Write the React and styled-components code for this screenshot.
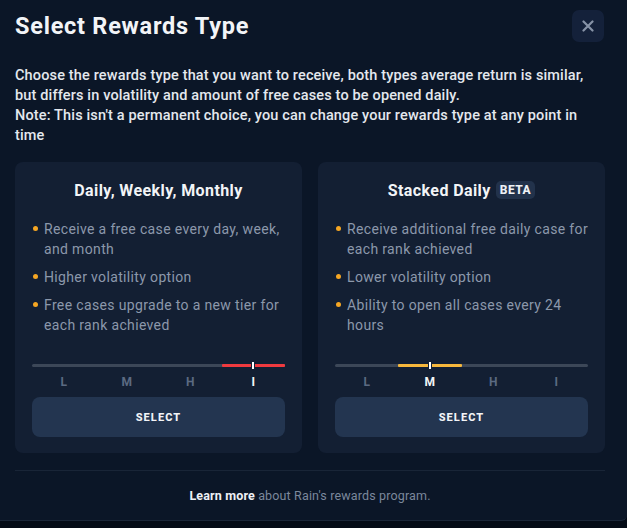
import styled, { createGlobalStyle } from 'styled-components';

const GlobalStyle = createGlobalStyle`
    html, body {
        margin: 0;
        padding: 0;
        background: #040b16;
    }
    body {
        font-family: Roboto, "Noto Sans", sans-serif;
    }
`;

const plans = [
    {
        title: 'Daily, Weekly, Monthly',
        beta: false,
        points: [
            'Receive a free case every day, week, and month',
            'Higher volatility option',
            'Free cases upgrade to a new tier for each rank achieved'
        ],
        level: 3,
        color: '#f03a3f'
    },
    {
        title: 'Stacked Daily',
        beta: true,
        points: [
            'Receive additional free daily case for each rank achieved',
            'Lower volatility option',
            'Ability to open all cases every 24 hours'
        ],
        level: 1,
        color: '#f6b73c'
    }
];

const levels = ['L', 'M', 'H', 'I'];

export default function App() {
    return (
        <>
            <GlobalStyle />
            <Modal>
                <Header>
                    <Title>Select Rewards Type</Title>
                    <CloseButton aria-label="close">
                        <svg width="12" height="12" viewBox="0 0 12 12">
                            <path d="M1.5 1.5 L10.5 10.5 M10.5 1.5 L1.5 10.5" stroke="#8793a7" strokeWidth="2.2" strokeLinecap="round" />
                        </svg>
                    </CloseButton>
                </Header>

                <Description>
                    Choose the rewards type that you want to receive, both types average return is similar, but differs in volatility and amount of free cases to be opened daily.
                    <br />
                    Note: This isn't a permanent choice, you can change your rewards type at any point in time
                </Description>

                <Cards>
                    {plans.map((plan) => (
                        <Card key={plan.title}>
                            <CardTitle>
                                {plan.title}
                                {plan.beta && <Beta>BETA</Beta>}
                            </CardTitle>
                            <Points>
                                {plan.points.map((p) => (
                                    <Point key={p}>{p}</Point>
                                ))}
                            </Points>
                            <Meter>
                                <Track>
                                    <Fill
                                        $color={plan.color}
                                        style={{ left: `${plan.level * 25}%` }}
                                    />
                                    <Thumb style={{ left: `${plan.level * 25 + 12.5}%` }} />
                                </Track>
                                <Labels>
                                    {levels.map((l, i) => (
                                        <Label key={l} $active={i === plan.level}>{l}</Label>
                                    ))}
                                </Labels>
                            </Meter>
                            <SelectButton>SELECT</SelectButton>
                        </Card>
                    ))}
                </Cards>

                <Footer>
                    <strong>Learn more</strong> about Rain's rewards program.
                </Footer>
            </Modal>
        </>
    );
}

const Modal = styled.div`
    box-sizing: border-box;
    width: 627px;
    height: 521px;
    background: #0b1627;
    border-bottom: 1px solid #1a2638;
    border-bottom-right-radius: 6px;
    padding: 10px 22px 0 15px;
    display: flex;
    flex-direction: column;
`;

const Header = styled.div`
    display: flex;
    align-items: center;
    justify-content: space-between;
    height: 32px;
`;

const Title = styled.h1`
    margin: 0;
    font-size: 23.5px;
    font-weight: 700;
    color: #f2f4f7;
    letter-spacing: 0.75px;
`;

const CloseButton = styled.button`
    width: 32px;
    height: 32px;
    border: none;
    border-radius: 7px;
    background: #14213a;
    display: flex;
    align-items: center;
    justify-content: center;
    padding: 0;
    margin-right: 1px;
    cursor: pointer;
`;

const Description = styled.p`
    margin: 24px 0 0 0;
    font-size: 14.5px;
    line-height: 20px;
    font-weight: 500;
    letter-spacing: 0.15px;
    color: #e4e8ee;
`;

const Cards = styled.div`
    display: grid;
    grid-template-columns: 1fr 1fr;
    gap: 16px;
    margin-top: 16px;
`;

const Card = styled.div`
    background: #131f33;
    border-radius: 8px;
    padding: 16px 17px 16px;
    display: flex;
    flex-direction: column;
    height: 291px;
    box-sizing: border-box;
`;

const CardTitle = styled.div`
    display: flex;
    align-items: center;
    justify-content: center;
    gap: 5px;
    height: 24px;
    font-size: 16px;
    font-weight: 700;
    letter-spacing: 0.4px;
    color: #f2f4f7;
`;

const Beta = styled.span`
    background: #22324b;
    border-radius: 5px;
    padding: 2px 4px;
    font-size: 12px;
    font-weight: 800;
    letter-spacing: 0.5px;
    color: #eef1f5;
`;

const Points = styled.ul`
    list-style: none;
    margin: 17px -4px 0 0;
    padding: 0;
    display: flex;
    flex-direction: column;
    gap: 8px;
`;

const Point = styled.li`
    position: relative;
    padding-left: 12px;
    font-size: 14px;
    line-height: 20px;
    letter-spacing: 0.35px;
    color: #8c98ab;

    &::before {
        content: '';
        position: absolute;
        left: 1px;
        top: 7px;
        width: 5px;
        height: 5px;
        border-radius: 50%;
        background: #f5a623;
    }
`;

const Meter = styled.div`
    margin-top: auto;
    margin-bottom: 8px;
`;

const Track = styled.div`
    position: relative;
    height: 3px;
    border-radius: 2px;
    background: #3c4758;
`;

const Fill = styled.div`
    position: absolute;
    top: 0;
    bottom: 0;
    width: 25%;
    background: ${(p) => p.$color};
    border-radius: 1px;
`;

const Thumb = styled.div`
    position: absolute;
    top: -3px;
    width: 2px;
    height: 7px;
    margin-left: -2px;
    background: #ffffff;
    border: 1px solid #131f33;
`;

const Labels = styled.div`
    display: grid;
    grid-template-columns: repeat(4, 1fr);
    margin-top: 8px;
    line-height: 14px;
`;

const Label = styled.span`
    text-align: center;
    font-size: 12px;
    font-weight: 700;
    color: ${(p) => (p.$active ? '#f2f4f7' : '#5b6a82')};
`;

const SelectButton = styled.button`
    height: 40px;
    border: none;
    border-radius: 8px;
    background: #233550;
    color: #f2f4f7;
    font-family: Roboto, "Noto Sans", sans-serif;
    font-size: 11px;
    font-weight: 800;
    letter-spacing: 1.1px;
    cursor: pointer;
`;

const Footer = styled.div`
    margin-top: 17px;
    border-top: 1px solid #192537;
    padding-top: 17px;
    text-align: center;
    font-size: 12.5px;
    letter-spacing: 0.15px;
    color: #7b889c;

    strong {
        color: #eef1f5;
        font-weight: 700;
    }
`;
